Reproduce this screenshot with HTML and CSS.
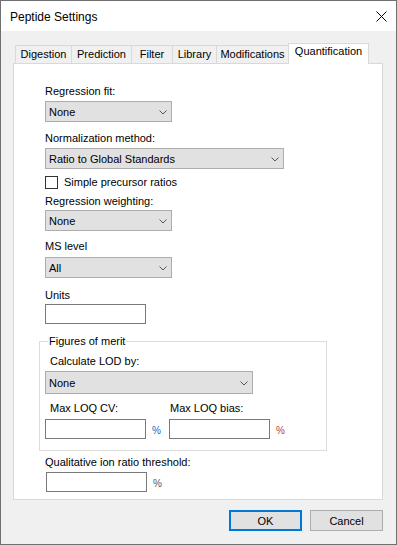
FILE: index.html
```html
<!DOCTYPE html>
<html lang="en">
<head>
    <meta charset="UTF-8">
    <title>Peptide Settings</title>
    <link rel="stylesheet" href="styles.css">
</head>
<body>
    <div class="window">
        <div class="titlebar">
            <span class="title">Peptide Settings</span>
            <svg class="close" width="11" height="11" viewBox="0 0 11 11">
                <path d="M0.5 0.5 L10.5 10.5 M10.5 0.5 L0.5 10.5" stroke="#000" stroke-width="1" fill="none"/>
            </svg>
        </div>

        <div class="client">
            <div class="tabs">
                <div class="tab digestion">Digestion</div>
                <div class="tab prediction">Prediction</div>
                <div class="tab filter">Filter</div>
                <div class="tab library">Library</div>
                <div class="tab modifications">Modifications</div>
                <div class="tab active">Quantification</div>
            </div>

            <div class="panel">
                <div class="lbl first">Regression fit:</div>
                <div class="combo short">
                    <span>None</span>
                    <svg class="arrow" width="8" height="5" viewBox="0 0 8 5"><path d="M0.5 0.5 L4 4 L7.5 0.5" stroke="#555" fill="none"/></svg>
                </div>

                <div class="lbl gap10">Normalization method:</div>
                <div class="combo long">
                    <span>Ratio to Global Standards</span>
                    <svg class="arrow" width="8" height="5" viewBox="0 0 8 5"><path d="M0.5 0.5 L4 4 L7.5 0.5" stroke="#555" fill="none"/></svg>
                </div>

                <div class="check-row">
                    <span class="checkbox"></span>
                    <span>Simple precursor ratios</span>
                </div>

                <div class="lbl gap6">Regression weighting:</div>
                <div class="combo short tight">
                    <span>None</span>
                    <svg class="arrow" width="8" height="5" viewBox="0 0 8 5"><path d="M0.5 0.5 L4 4 L7.5 0.5" stroke="#555" fill="none"/></svg>
                </div>

                <div class="lbl gap9">MS level</div>
                <div class="combo short loose">
                    <span>All</span>
                    <svg class="arrow" width="8" height="5" viewBox="0 0 8 5"><path d="M0.5 0.5 L4 4 L7.5 0.5" stroke="#555" fill="none"/></svg>
                </div>

                <div class="lbl gap11">Units</div>
                <div class="textbox tight"></div>

                <fieldset class="group">
                    <legend>Figures of merit</legend>
                    <div class="lbl inset lod">Calculate LOD by:</div>
                    <div class="combo lod-combo">
                        <span>None</span>
                        <svg class="arrow" width="8" height="5" viewBox="0 0 8 5"><path d="M0.5 0.5 L4 4 L7.5 0.5" stroke="#555" fill="none"/></svg>
                    </div>

                    <div class="loq-row">
                        <div class="loq-col">
                            <div class="lbl inset">Max LOQ CV:</div>
                            <div class="unit-row">
                                <div class="textbox"></div>
                                <span class="pct blue">%</span>
                            </div>
                        </div>
                        <div class="loq-col">
                            <div class="lbl inset-sm">Max LOQ bias:</div>
                            <div class="unit-row">
                                <div class="textbox"></div>
                                <span class="pct red">%</span>
                            </div>
                        </div>
                    </div>
                </fieldset>

                <div class="lbl gap5">Qualitative ion ratio threshold:</div>
                <div class="unit-row ratio-row">
                    <div class="textbox"></div>
                    <span class="pct">%</span>
                </div>
            </div>

            <div class="buttons">
                <button class="btn default">OK</button>
                <button class="btn">Cancel</button>
            </div>
        </div>
    </div>
</body>
</html>
```

FILE: styles.css
```css
body {
    margin: 0;
    font-family: 'Liberation Sans', Arial, sans-serif;
    font-size: 11px;
    color: #000000;
    background-color: #f0f0f0;
}

.window {
    width: 397px;
    height: 545px;
    box-sizing: border-box;
    border: 1px solid #707070;
    display: flex;
    flex-direction: column;
}

/* Title bar */
.titlebar {
    height: 30px;
    background-color: #ffffff;
    display: flex;
    align-items: center;
    justify-content: space-between;
    padding: 0 9px 0 9px;
}

.title {
    font-size: 12px;
    padding-top: 1px;
}

.close {
    margin-top: 1px;
}

.client {
    flex: 1;
    padding: 12px 13px 0 12px;
}

/* Tabs */
.tabs {
    display: flex;
    align-items: flex-end;
    height: 20px;
    padding-left: 2px;
}

.tab {
    height: 18px;
    box-sizing: border-box;
    line-height: 16px;
    text-align: center;
    border: 1px solid #d9d9d9;
    border-bottom: none;
    margin-right: -1px;
    background-color: #f0f0f0;
    white-space: nowrap;
    overflow: hidden;
}

.tab.digestion { width: 57px; }
.tab.prediction { width: 61px; }
.tab.filter { width: 42px; }
.tab.library { width: 45px; }
.tab.modifications { width: 73px; }

.tab.active {
    position: relative;
    z-index: 1;
    width: 81px;
    height: 21px;
    margin-bottom: -1px;
    line-height: 15px;
    background-color: #ffffff;
}

.panel {
    height: 437px;
    box-sizing: border-box;
    background-color: #ffffff;
    border: 1px solid #d9d9d9;
    padding: 21px 0 0 31px;
}

/* Labels and controls */
.lbl {
    line-height: 13px;
    white-space: nowrap;
}

.gap5 { margin-top: 5px; }
.gap6 { margin-top: 6px; }
.gap9 { margin-top: 9px; }
.gap10 { margin-top: 10px; }
.gap11 { margin-top: 11px; }

.combo {
    height: 21px;
    box-sizing: border-box;
    margin-top: 3px;
    border: 1px solid #adadad;
    background-color: #e1e1e1;
    display: flex;
    align-items: center;
    justify-content: space-between;
    padding: 0 4px 0 3px;
}

.combo.short { width: 127px; }
.combo.long { width: 239px; }
.combo.tight { margin-top: 2px; }
.combo.loose { margin-top: 4px; }

.arrow {
    margin-top: 1px;
}

.check-row {
    display: flex;
    align-items: center;
    gap: 6px;
    height: 14px;
    margin-top: 6px;
}

.checkbox {
    width: 13px;
    height: 13px;
    box-sizing: border-box;
    border: 1px solid #333333;
    background-color: #ffffff;
}

.textbox {
    width: 101px;
    height: 20px;
    box-sizing: border-box;
    border: 1px solid #7a7a7a;
    background-color: #ffffff;
}

.textbox.tight { margin-top: 2px; }

/* Figures of merit group */
.group {
    width: 288px;
    box-sizing: border-box;
    margin: 10px 0 0 -6px;
    padding: 0 5px 11px 5px;
    border: 1px solid #dcdcdc;
}

.group legend {
    margin-left: 3px;
    padding: 0 1px;
    line-height: 14px;
}

.lbl.inset { margin-left: 5px; }
.lbl.inset-sm { margin-left: 1px; }
.lbl.lod { margin-top: 7px; }

.combo.lod-combo {
    width: 208px;
    height: 23px;
}

.loq-row {
    display: flex;
    gap: 9px;
    margin-top: 8px;
}

.unit-row {
    display: flex;
    align-items: center;
    gap: 6px;
    margin-top: 4px;
}

.pct {
    font-size: 10px;
    padding-top: 3px;
    color: #555555;
    width: 8px;
}

.pct.blue { color: #2a62b8; }
.pct.red { color: #b5452a; }

.ratio-row {
    margin-top: 3px;
    margin-left: 1px;
}

/* Dialog buttons */
.buttons {
    display: flex;
    justify-content: flex-end;
    gap: 8px;
    margin-top: 10px;
}

.btn {
    width: 73px;
    height: 21px;
    box-sizing: border-box;
    font-family: 'Liberation Sans', Arial, sans-serif;
    font-size: 11px;
    color: #000000;
    background-color: #e1e1e1;
    border: 1px solid #adadad;
    padding: 0;
}

.btn.default {
    border: 2px solid #0078d7;
}
```
